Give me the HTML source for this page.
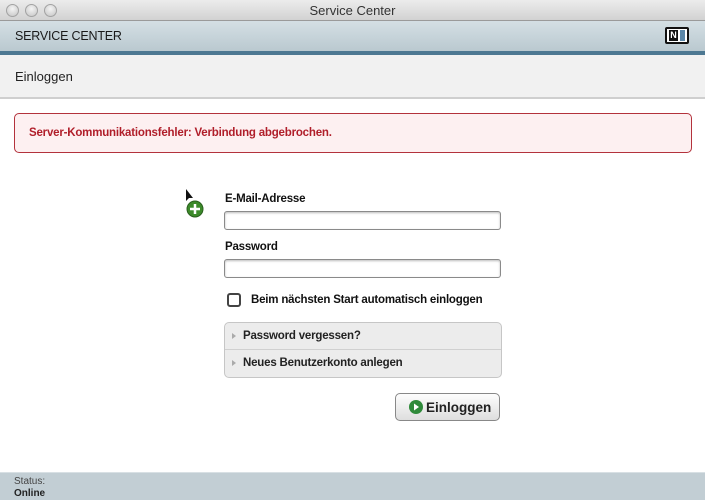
<!DOCTYPE html>
<html><head><meta charset="utf-8"><style>
*{margin:0;padding:0;box-sizing:border-box}
body{width:705px;height:500px;overflow:hidden;background:#fff;font-family:"Liberation Sans",sans-serif;position:relative;color:#222}
.abs{position:absolute}
.title{left:0;top:0;width:705px;height:21px;background:linear-gradient(#ececec,#d2d2d2);border-bottom:1px solid #9a9a9a;text-align:center;font-size:13px;line-height:21px;color:#333}
.dot{top:4px;width:13px;height:13px;border-radius:50%;background:radial-gradient(circle at 50% 35%,#f4f4f4,#c4c4c4);border:1px solid #a2a2a2}
.hdr{left:0;top:21px;width:705px;height:31px;background:linear-gradient(#d4dfe4,#b9c8cf);font-size:12.5px;line-height:31px;padding-left:15px;color:#1a1a1a;letter-spacing:-0.2px}
.bline{left:0;top:51px;width:705px;height:4px;background:#4d7892}
.sub{left:0;top:55px;width:705px;height:44px;background:#f1f1f1;border-bottom:2px solid #cfcfcf;font-size:13px;line-height:44px;padding-left:15px;color:#222}
.err{left:14px;top:113px;width:678px;height:40px;border:1px solid #b3323c;border-radius:5px;background:#fdf0f1;color:#b01e2a;font-size:11.5px;font-weight:bold;line-height:38px;padding-left:14px;letter-spacing:-0.2px}
.lbl{font-size:11.5px;font-weight:bold;color:#111;letter-spacing:-0.2px}
.inp{width:277px;height:19px;border:1px solid #8a8a8a;border-radius:3px;background:#fff;box-shadow:inset 0 1px 2px #bbb}
.acc{left:224px;top:322px;width:278px;height:56px;border:1px solid #c6c6c6;border-radius:5px;background:#ececec}
.row{height:27px;line-height:27px;font-size:11.5px;font-weight:bold;padding-left:18px;position:relative;letter-spacing:-0.2px}
.row:before{content:"";position:absolute;left:7px;top:10px;border-left:4px solid #aaa;border-top:3.5px solid transparent;border-bottom:3.5px solid transparent}
.btn{left:395px;top:393px;width:105px;height:28px;border:1px solid #888;border-radius:5px;background:linear-gradient(#fdfdfd,#dedede);font-size:13.5px;font-weight:bold;line-height:27px;padding-left:30px;color:#222}
.status{left:0;top:472px;width:705px;height:28px;background:#c2ced4;border-top:1px solid #d8e0e4;font-size:10px;padding-left:14px;line-height:12px;padding-top:3px}
</style></head><body>
<div class="abs title">Service Center</div>
<div class="abs dot" style="left:6px"></div><div class="abs dot" style="left:25px"></div><div class="abs dot" style="left:44px"></div>
<div class="abs hdr">SERVICE CENTER</div>
<div class="abs" style="left:665px;top:27px;width:24px;height:17px;border:2px solid #111;background:#fff;border-radius:2px">
 <div class="abs" style="left:2px;top:1px;width:9px;height:11px;background:#111;color:#fff;font-size:9px;font-weight:bold;line-height:11px;text-align:center">N</div>
 <div class="abs" style="left:13px;top:1px;width:5px;height:11px;background:#5a86a8"></div></div>
<div class="abs bline"></div>
<div class="abs sub">Einloggen</div>
<div class="abs err">Server-Kommunikationsfehler: Verbindung abgebrochen.</div>
<svg class="abs" style="left:184px;top:188px" width="22" height="32"><path d="M2 1 L2 13 L5 10 L9 10 Z" fill="#111"/><circle cx="11" cy="21" r="8" fill="#3c8a2a" stroke="#2a5f1e"/><path d="M11 16v10M6 21h10" stroke="#fff" stroke-width="2.5"/></svg>
<div class="abs lbl" style="left:225px;top:193px">E-Mail-Adresse</div>
<div class="abs inp" style="left:224px;top:211px"></div>
<div class="abs lbl" style="left:225px;top:241px">Password</div>
<div class="abs inp" style="left:224px;top:259px"></div>
<div class="abs" style="left:227px;top:293px;width:14px;height:14px;border:2px solid #444;border-radius:3px;background:#fff"></div>
<div class="abs lbl" style="left:251px;top:294px">Beim nächsten Start automatisch einloggen</div>
<div class="abs acc"><div class="row" style="border-bottom:1px solid #d0d0d0">Password vergessen?</div><div class="row">Neues Benutzerkonto anlegen</div></div>
<div class="abs btn">Einloggen</div>
<svg class="abs" style="left:408px;top:399px" width="16" height="16"><circle cx="8" cy="8" r="7" fill="#2f8a3a"/><path d="M6 4.5 L11 8 L6 11.5Z" fill="#fff"/></svg>
<div class="abs status"><span style="color:#444">Status:</span><br><b>Online</b></div>
</body></html>
